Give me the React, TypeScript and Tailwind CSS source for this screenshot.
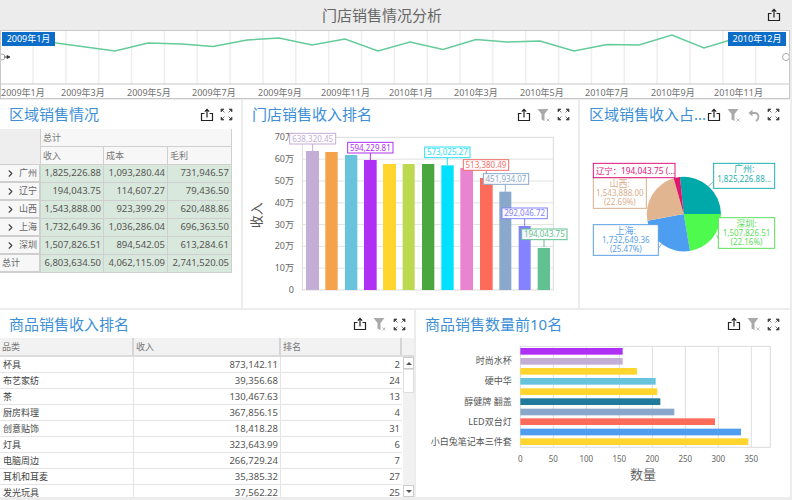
import React from "react";
import { ChevronRight } from "lucide-react";

const Share = () => (
  <svg width="14" height="14" viewBox="0 0 14 14" fill="none" stroke="#222" strokeWidth="1.2">
    <path d="M4.5 5.5H1.5v7h11v-7h-3" />
    <path d="M7 9.5V1.5M4.8 3.6 7 1.4l2.2 2.2" />
  </svg>
);
const Funnel = () => (
  <svg width="14" height="14" viewBox="0 0 14 14">
    <path d="M0.5 1h11L7.500 6v7L4.500 11.500V6z" fill="#a9a9a9" />
    <path d="M9.500 10.500l3 3M12.500 10.500l-3 3" stroke="#b5b5b5" strokeWidth="0.9" />
  </svg>
);
const Undo = () => (
  <svg width="14" height="14" viewBox="0 0 14 14" fill="none">
    <path d="M1.500 5 5.500 1.500v7z" fill="#a9a9a9" />
    <path d="M5 5h2.500c3 0 4 2 4 4s-1 3-2.500 4" stroke="#a9a9a9" strokeWidth="1.8" />
  </svg>
);
const Expand = () => (
  <svg width="13" height="13" viewBox="0 0 13 13" fill="#444" stroke="#444" strokeWidth="0.7">
    <path d="M1 1h3L1 4zM12 1H9l3 3zM1 12h3l-3-3zM12 12H9l3-3z" />
    <path d="M2 2l2.500 2.500M11 2 8.500 4.500M2 11l2.500-2.500M11 11 8.500 8.500" />
  </svg>
);

const Title = ({ text, icons, short, wide }: { text: string; icons: React.ReactNode; short?: boolean; wide?: boolean }) => (
  <div className={`${short ? "h-[28px]" : "h-[29px]"} ${wide ? "pr-[10px]" : "pr-[8px]"} shrink-0 flex items-center justify-between pl-[9px] bg-white`}>
    <span className="text-[15px] leading-none text-[#3d8fd8] whitespace-nowrap">{text}</span>
    <div className="flex items-center gap-[6px] shrink-0">{icons}</div>
  </div>
);

const linePts =
  "44,42 56,43 115,51 148,43 182,44 213,46.5 247,40 279,38 312,45 345,39 378,51 410,42 443,49.5 476,39.5 507,42 540,41 574,51 607,44.5 639,45 672,35 704,48 737,38 770,46";
const gridXs = Array.from({ length: 23 }, (_, i) => 32 + i * 32.85);
const axisLabels: [number, string][] = [
  [0, "2009年1月"], [60, "2009年3月"], [126, "2009年5月"], [191, "2009年7月"], [257, "2009年9月"], [320, "2009年11月"],
  [388, "2010年1月"], [453, "2010年3月"], [519, "2010年5月"], [584, "2010年7月"], [650, "2010年9月"], [713, "2010年11月"],
];

const Timeline = () => (
  <div className="relative h-[69px] mr-[2px] bg-white border border-[#c8c8c8] overflow-hidden">
    <svg width="790" height="67" className="block">
      {gridXs.map((x) => (
        <line key={x} x1={x} x2={x} y1="0" y2="53" stroke="#eeeeee" strokeWidth="1.5" />
      ))}
      <line x1="0" x2="790" y1="53" y2="53" stroke="#c9c9c9" />
      <polyline points={linePts} transform="translate(-1,-31)" fill="none" stroke="#64cb9a" strokeWidth="1.5" />
      {axisLabels.map(([x, t]) => (
        <text key={t} x={x} y="65" fontSize="9" fill="#707070">{t}</text>
      ))}
      <circle cx="1" cy="26" r="3" fill="#fff" stroke="#aaa" />
      <path d="M3 26h5M6 24.500l3 1.500-3 1.500z" stroke="#333" fill="#333" strokeWidth="0.8" />
      <circle cx="785" cy="26" r="3.500" fill="#fff" stroke="#aaa" />
    </svg>
    <div className="absolute left-[1px] top-[1px] w-[53px] h-[14px] bg-[#0b6dc8] text-white text-[9px] leading-[14px] text-center">2009年1月</div>
    <div className="absolute left-[727px] top-[1px] w-[58px] h-[14px] bg-[#0b6dc8] text-white text-[9px] leading-[14px] text-center">2010年12月</div>
  </div>
);

const pivotRows = [
  ["广州", "1,825,226.88", "1,093,280.44", "731,946.57"],
  ["辽宁", "194,043.75", "114,607.27", "79,436.50"],
  ["山西", "1,543,888.00", "923,399.29", "620,488.86"],
  ["上海", "1,732,649.36", "1,036,286.04", "696,363.50"],
  ["深圳", "1,507,826.51", "894,542.05", "613,284.61"],
];
const hc = "border-r border-b border-[#cfcfcf] bg-[#f7f7f7] text-[#777] text-[9px] flex items-center pl-[2px]";
const dc = "border-r border-b border-[#cfcfcf] bg-[#d9e8dc] text-[#555] text-[9.5px] flex items-center justify-end pr-[2px]";

const Pivot = () => (
  <div className="grid grid-cols-[41px_63px_64px_64px] grid-rows-[18px_18px_repeat(6,18px)] w-[232px]">
    <div className="row-span-2 bg-[#eeeeee] border-r border-b border-[#cfcfcf]" />
    <div className={`col-span-3 ${hc}`}>总计</div>
    <div className={hc}>收入</div>
    <div className={hc}>成本</div>
    <div className={hc}>毛利</div>
    {pivotRows.map((r) => (
      <React.Fragment key={r[0]}>
        <div className="border-r-2 border-b-2 border-[#cfcfcf] bg-[#f7f7f7] text-[#666] text-[9px] flex items-center pl-[5px] gap-[3px]">
          <ChevronRight size={11} strokeWidth={2.5} color="#444" />
          {r[0]}
        </div>
        <div className={dc}>{r[1]}</div>
        <div className={dc}>{r[2]}</div>
        <div className={dc}>{r[3]}</div>
      </React.Fragment>
    ))}
    <div className="border-r-2 border-b-2 border-[#cfcfcf] bg-[#f7f7f7] text-[#666] text-[9px] flex items-center pl-[2px]">总计</div>
    <div className={dc}>6,803,634.50</div>
    <div className={dc}>4,062,115.09</div>
    <div className={dc}>2,741,520.05</div>
  </div>
);

const bars: [number, number, number, string][] = [
  [183, 222, 153, "#c3aed6"], [241, 278, 156, "#f4a24b"], [300, 337, 165, "#68c3dc"], [357, 395, 180, "#b02ff5"],
  [414, 453, 192, "#ffd52e"], [473, 509, 192, "#bcd94f"], [531, 568, 192, "#4aa63f"], [589, 626, 196, "#00e1ff"],
  [646, 684, 204, "#e884d0"], [705, 743, 234, "#ff6b5b"], [763, 799, 275, "#8aa8cc"], [821, 857, 378, "#8482ff"],
  [878, 915, 444, "#62c190"],
];
const tips: [number, number, number, string, string, number][] = [
  [134, 100, 138, "638,320.45", "#c3aed6", 203],
  [308, 127, 136, "594,229.81", "#b02ff5", 376],
  [539, 141, 136, "573,025.27", "#28e0f5", 607],
  [655, 179, 136, "513,380.49", "#f0706a", 724],
  [715, 221, 136, "451,934.07", "#8aa8cc", 781],
  [771, 324, 136, "292,046.72", "#8482ff", 839],
  [830, 387, 136, "194,043.75", "#62c190", 897],
];
const BarChart = () => (
  <svg width="335" height="179" viewBox="-6 87 1005 537" className="block">
    <rect x="172" y="112" width="753" height="458" fill="none" stroke="#dcdcdc" strokeWidth="3" />
    {[0, 1, 2, 3, 4, 5, 6, 7].map((i) => {
      const y = 570 - i * 65.4;
      return (
        <g key={i}>
          {i > 0 && i < 7 && <line x1="172" x2="925" y1={y} y2={y} stroke="#e2e2e2" strokeWidth="3" />}
          <text x="147" y={y + 9} textAnchor="end" fontSize="27" fill="#666">{i === 0 ? "0" : `${i}0万`}</text>
        </g>
      );
    })}
    {bars.map(([a, b, t, c]) => (
      <rect key={a} x={a} y={t} width={b - a} height={570 - t} fill={c} />
    ))}
    {tips.map(([x, y, w, t, c, cx]) => (
      <g key={t}>
        <line x1={cx} x2={cx} y1={y + 32} y2={y + 54} stroke={c} strokeWidth="3" />
        <rect x={x} y={y} width={w} height="32" fill="#fff" fillOpacity="0.92" stroke={c} strokeWidth="3" />
        <text x={x + w / 2} y={y + 25} textAnchor="middle" fontSize="24" fill={c}>{t}</text>
      </g>
    ))}
    <text x="0" y="0" transform="translate(47,346) rotate(-90)" textAnchor="middle" fontSize="39" fill="#555">收入</text>
  </svg>
);

const Label = ({ x, y, w, h, c, lines, fs = 24 }: { x: number; y: number; w: number; h: number; c: string; lines: string[]; fs?: number }) => (
  <g>
    <rect x={x} y={y} width={w} height={h} fill="#fff" stroke={c} strokeWidth="3" />
    {lines.map((l, i) => (
      <text key={l} x={x + w / 2} y={y + 27 + i * 28} textAnchor="middle" fontSize={i === 0 ? 27 : fs} fill={c}>{l}</text>
    ))}
  </g>
);
const PieChart = () => (
  <svg width="210" height="179" viewBox="0 87 630 537" className="block">
    <path d="M311 342 L300 231 A112 112 0 0 1 423 342Z" fill="#00a9a9" />
    <path d="M311 342 L423 342 A112 112 0 0 1 330 453Z" fill="#4dfa4d" />
    <path d="M311 342 L330 453 A112 112 0 0 1 202 362Z" fill="#4d9df0" />
    <path d="M311 342 L202 362 A112 112 0 0 1 281 235Z" fill="#e2b591" />
    <path d="M311 342 L281 235 A112 112 0 0 1 300 231Z" fill="#e0156e" />
    <path d="M385 258 L401 245M410 405 L416 418M245 430 L236 445" stroke="#9bb" strokeWidth="3" fill="none" />
    <Label x={40} y={233} w={159} h={92} c="#d9ae8c" lines={["山西:", "1,543,888.00", "(22.69%)"]} />
    <g>
      <rect x={40} y={190} width={245} height={43} fill="#fff" stroke="#e0157e" strokeWidth="3" />
      <text x={48} y={221} fontSize="25" fill="#e0157e">辽宁：194,043.75 (...</text>
    </g>
    <Label x={401} y={190} w={183} h={75} c="#1fb0b0" lines={["广州:", "1,825,226.88..."]} />
    <Label x={415} y={353} w={169} h={92} c="#5ce05c" lines={["深圳:", "1,507,826.51", "(22.16%)"]} />
    <Label x={40} y={374} w={195} h={92} c="#5a9fe6" lines={["上海:", "1,732,649.36", "(25.47%)"]} />
  </svg>
);

const tableRows = [
  ["杯具", "873,142.11", "2"], ["布艺家纺", "39,356.68", "24"], ["茶", "130,467.63", "13"],
  ["厨房料理", "367,856.15", "4"], ["创意贴饰", "18,418.28", "31"], ["灯具", "323,643.99", "6"],
  ["电脑周边", "266,729.24", "7"], ["耳机和耳麦", "35,385.32", "27"], ["发光玩具", "37,562.22", "25"],
];
const th = "h-[17px] flex items-center pl-[2px] text-[9px] text-[#777] border-r-2 border-[#d5d5d5]";
const Table = () => (
  <div className="flex-1 min-h-0 overflow-hidden flex flex-col">
    <div className="grid grid-cols-[134px_147px_121px_1fr] bg-[#f2f2f2] border-b-2 border-[#dcdcdc] shrink-0">
      <div className={th}>品类</div>
      <div className={th}>收入</div>
      <div className={th}>排名</div>
      <div className="h-[17px]" />
    </div>
    <div className="flex flex-1 min-h-0">
      <div className="w-[402px] shrink-0">
        {tableRows.map((r) => (
          <div key={r[0]} className="grid grid-cols-[134px_147px_121px] h-[16px] border-b border-[#e4e4e4] text-[#555]">
            <div className="border-r border-[#e4e4e4] pl-[3px] text-[9px] leading-[15px] text-[#444]">{r[0]}</div>
            <div className="border-r border-[#e4e4e4] pr-[2px] text-right text-[9.5px] leading-[15px]">{r[1]}</div>
            <div className="pr-[2px] text-right text-[9.5px] leading-[15px]">{r[2]}</div>
          </div>
        ))}
      </div>
      <div className="flex-1 flex flex-col bg-[#f1f1f1] ml-[1px]">
        <div className="h-[12px] bg-white border border-[#ccc] flex items-center justify-center">
          <div className="border-x-[3px] border-x-transparent border-b-[3px] border-b-[#555]" />
        </div>
        <div className="h-[24px] bg-white border border-[#ddd]" />
        <div className="flex-1" />
        <div className="h-[12px] bg-white border border-[#ccc] flex items-center justify-center">
          <div className="border-x-[3px] border-x-transparent border-t-[3px] border-t-[#555]" />
        </div>
      </div>
    </div>
  </div>
);

const hbars: [number, number, string][] = [
  [139, 623, "#b02ff5"], [169, 623, "#c3aed6"], [199, 666, "#ffd52e"], [229, 722, "#68c3dc"], [260, 727, "#ffd52e"],
  [290, 736, "#1f7a9c"], [321, 778, "#8aa8cc"], [350, 900, "#ff6b5b"], [381, 978, "#4f9def"], [410, 1000, "#ffd52e"],
];
const ylabels: [number, string][] = [
  [169, "时尚水杯"], [229, "硬中华"], [290, "醇健牌 翻盖"], [350, "LED双台灯"], [410, "小白兔笔记本三件套"],
];
const HBarChart = () => (
  <svg width="374" height="159" viewBox="3 99 1122 477" className="block">
    <rect x="316" y="124" width="750" height="303" fill="none" stroke="#dcdcdc" strokeWidth="3" />
    {[0, 1, 2, 3, 4, 5, 6, 7].map((i) => {
      const x = 316 + i * 99;
      return (
        <g key={i}>
          {i > 0 && <line x1={x} x2={x} y1="124" y2="427" stroke="#dedede" strokeWidth="3" />}
          <text x={x} y="470" textAnchor="middle" fontSize="24" fill="#666">{i * 50}</text>
        </g>
      );
    })}
    {hbars.map(([y, r, c]) => (
      <rect key={y} x="316" y={y - 10} width={r - 316} height="20" fill={c} />
    ))}
    {ylabels.map(([y, t]) => (
      <text key={t} x="290" y={y + 9} textAnchor="end" fontSize="27" fill="#555">{t}</text>
    ))}
    <text x="684" y="523" textAnchor="middle" fontSize="39" fill="#666">数量</text>
  </svg>
);

export default function App() {
  return (
    <div className="w-[792px] h-[500px] bg-[#ececec] overflow-hidden font-['Noto_Sans','Noto_Sans_CJK_SC',sans-serif] flex flex-col">
      <div className="h-[30px] shrink-0 relative flex items-center justify-center pr-[28px]">
        <span className="text-[15px] text-[#666]">门店销售情况分析</span>
        <div className="absolute right-[11px] top-[8px]"><Share /></div>
      </div>
      <Timeline />
      <div className="h-[208px] shrink-0 mt-[1px] flex gap-[2px] pr-[2px]">
        <div className="w-[241px] flex flex-col bg-white overflow-hidden">
          <Title text="区域销售情况" icons={<><Share /><Expand /></>} />
          <Pivot />
        </div>
        <div className="w-[335px] flex flex-col bg-white overflow-hidden">
          <Title text="门店销售收入排名" icons={<><Share /><Funnel /><Expand /></>} />
          <BarChart />
        </div>
        <div className="flex-1 min-w-0 flex flex-col bg-white overflow-hidden">
          <Title wide text="区域销售收入占..." icons={<><Share /><Funnel /><Undo /><Expand /></>} />
          <PieChart />
        </div>
      </div>
      <div className="h-[187px] shrink-0 mt-[2px] flex gap-[2px] pr-[2px]">
        <div className="w-[414px] flex flex-col bg-white overflow-hidden">
          <Title short text="商品销售收入排名" icons={<><Share /><Funnel /><Expand /></>} />
          <Table />
        </div>
        <div className="flex-1 min-w-0 flex flex-col bg-white overflow-hidden">
          <Title short wide text="商品销售数量前10名" icons={<><Share /><Funnel /><Expand /></>} />
          <HBarChart />
        </div>
      </div>
    </div>
  );
}
